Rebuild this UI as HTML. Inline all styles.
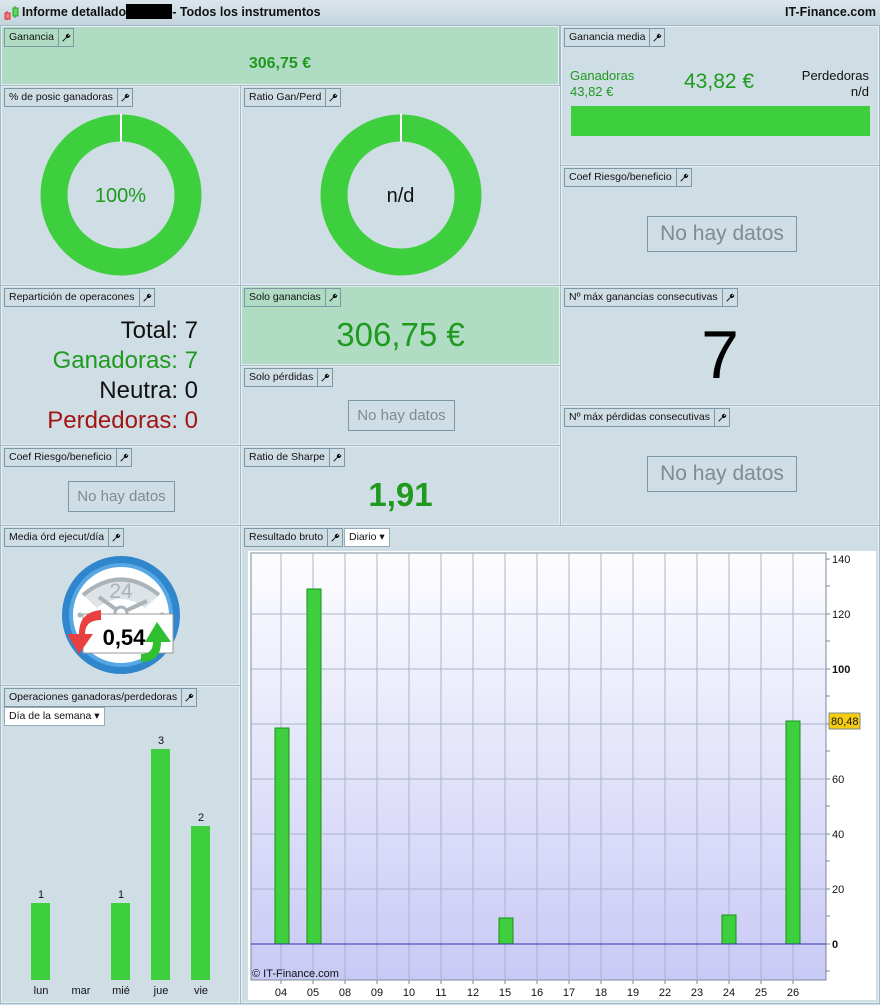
<!DOCTYPE html>
<html><head><meta charset="utf-8"><style>
*{margin:0;padding:0;box-sizing:border-box}
body{width:880px;height:1004px;background:#cfdde4;font-family:"Liberation Sans",sans-serif;position:relative;overflow:hidden}
.hdr{position:absolute;left:0;top:0;width:880px;height:25px;background:linear-gradient(#dbe6ec,#c3d4dd);font-weight:bold;font-size:12.5px;line-height:25px;color:#111}
.p{position:absolute;border:1px solid #a2bac8;outline:1px solid #e6eef2;outline-offset:-2px;background:#cfdde4}
.g{background:#b0dcc4}
.t{position:absolute;left:3px;top:2px;height:19px;border:1px solid #7d98a4;font-size:10.5px;line-height:17px;display:flex;color:#111;background:transparent}
.t span{padding:0 4px}
.t i{border-left:1px solid #7d98a4;width:15px;display:flex;align-items:center;justify-content:center}
.nd{position:absolute;border:1px solid #7d98a4;color:#7d8c94;text-align:center}
.c{position:absolute;text-align:center;width:100%}
</style></head><body>
<div class="hdr">
<svg style="position:absolute;left:3px;top:5px" width="16" height="16"><line x1="4" y1="6" x2="4" y2="15" stroke="#c33"/><rect x="2" y="8" width="5" height="6" fill="#f77" stroke="#c33"/><line x1="12" y1="1" x2="12" y2="13" stroke="#393"/><rect x="10" y="3" width="5" height="8" fill="#5d5" stroke="#393"/></svg>
<span style="position:absolute;left:22px">Informe detallado<span style="display:inline-block;width:46px;height:15px;background:#000;vertical-align:-3px"></span>- Todos los instrumentos</span>
<span style="position:absolute;right:4px">IT-Finance.com</span>
</div>

<svg width="0" height="0" style="position:absolute"><defs><symbol id="w" viewBox="0 0 10 10"><path d="M9 1.5a2.5 2.5 0 0 1-3.3 3.3L2 8.6 1.3 7.9 5 4.2A2.5 2.5 0 0 1 8.3 1L6.8 2.5 7.5 3.2z" fill="#111"/></symbol></defs></svg>

<div class="p g" style="left:0;top:25px;width:560px;height:61px"><div class="t"><span>Ganancia</span><i><svg width="10" height="10"><use href="#w"/></svg></i></div><div class="c" style="top:29px;font-size:16px;font-weight:bold;color:#1f9a1f">306,75 €</div></div>

<div class="p" style="left:560px;top:25px;width:320px;height:141px"><div class="t"><span>Ganancia media</span><i><svg width="10" height="10"><use href="#w"/></svg></i></div>
<div style="position:absolute;left:9px;top:42px;font-size:13px;color:#1f9a1f;line-height:16px">Ganadoras<br>43,82 €</div>
<div style="position:absolute;left:123px;top:44px;font-size:21px;color:#1f9a1f">43,82 €</div>
<div style="position:absolute;right:10px;top:42px;font-size:13px;color:#111;line-height:16px;text-align:right">Perdedoras<br>n/d</div>
<div style="position:absolute;left:10px;top:80px;width:299px;height:30px;background:#3ecf3e"></div></div>

<div class="p" style="left:0;top:85px;width:241px;height:201px"><div class="t"><span>% de posic ganadoras</span><i><svg width="10" height="10"><use href="#w"/></svg></i></div>
<svg style="position:absolute;left:39px;top:28px" width="162" height="162"><circle cx="81" cy="81" r="67" fill="none" stroke="#3ecf3e" stroke-width="27"/><line x1="81" y1="0" x2="81" y2="28" stroke="#fff" stroke-width="2"/></svg>
<div class="c" style="top:99px;font-size:20px;color:#1f9a1f">100%</div></div>

<div class="p" style="left:240px;top:85px;width:321px;height:201px"><div class="t"><span>Ratio Gan/Perd</span><i><svg width="10" height="10"><use href="#w"/></svg></i></div>
<svg style="position:absolute;left:79px;top:28px" width="162" height="162"><circle cx="81" cy="81" r="67" fill="none" stroke="#3ecf3e" stroke-width="27"/><line x1="81" y1="0" x2="81" y2="28" stroke="#fff" stroke-width="2"/></svg>
<div class="c" style="top:99px;font-size:20px;color:#111">n/d</div></div>

<div class="p" style="left:560px;top:165px;width:320px;height:121px"><div class="t"><span>Coef Riesgo/beneficio</span><i><svg width="10" height="10"><use href="#w"/></svg></i></div>
<div class="nd" style="left:86px;top:50px;width:150px;height:36px;font-size:21px;line-height:34px">No hay datos</div></div>

<div class="p" style="left:0;top:285px;width:241px;height:161px"><div class="t"><span>Repartición de operacones</span><i><svg width="10" height="10"><use href="#w"/></svg></i></div>
<div style="position:absolute;right:42px;top:30px;text-align:right;font-size:24px;line-height:30px"><div style="color:#111">Total: 7</div><div style="color:#1f9a1f">Ganadoras: 7</div><div style="color:#111">Neutra: 0</div><div style="color:#a31515">Perdedoras: 0</div></div></div>

<div class="p g" style="left:240px;top:285px;width:321px;height:81px"><div class="t"><span>Solo ganancias</span><i><svg width="10" height="10"><use href="#w"/></svg></i></div><div class="c" style="top:30px;font-size:33px;color:#1f9a1f">306,75 €</div></div>

<div class="p" style="left:240px;top:365px;width:321px;height:81px"><div class="t"><span>Solo pérdidas</span><i><svg width="10" height="10"><use href="#w"/></svg></i></div>
<div class="nd" style="left:107px;top:34px;width:107px;height:31px;font-size:15px;line-height:29px">No hay datos</div></div>

<div class="p" style="left:560px;top:285px;width:320px;height:121px"><div class="t"><span>Nº máx ganancias consecutivas</span><i><svg width="10" height="10"><use href="#w"/></svg></i></div><div class="c" style="top:30px;font-size:68px;color:#000">7</div></div>

<div class="p" style="left:560px;top:405px;width:320px;height:121px"><div class="t"><span>Nº máx pérdidas consecutivas</span><i><svg width="10" height="10"><use href="#w"/></svg></i></div>
<div class="nd" style="left:86px;top:50px;width:150px;height:36px;font-size:21px;line-height:34px">No hay datos</div></div>

<div class="p" style="left:0;top:445px;width:241px;height:81px"><div class="t"><span>Coef Riesgo/beneficio</span><i><svg width="10" height="10"><use href="#w"/></svg></i></div>
<div class="nd" style="left:67px;top:35px;width:107px;height:31px;font-size:15px;line-height:29px">No hay datos</div></div>

<div class="p" style="left:240px;top:445px;width:321px;height:81px"><div class="t"><span>Ratio de Sharpe</span><i><svg width="10" height="10"><use href="#w"/></svg></i></div><div class="c" style="top:30px;font-size:33px;font-weight:bold;color:#1f9a1f">1,91</div></div>

<div class="p" style="left:0;top:525px;width:241px;height:161px"><div class="t"><span>Media órd ejecut/día</span><i><svg width="10" height="10"><use href="#w"/></svg></i></div>
<svg style="position:absolute;left:60px;top:24px" width="130" height="130">
<circle cx="60" cy="65" r="59" fill="#2f86cc"/><circle cx="60" cy="65" r="52" fill="#55a8e4"/><circle cx="60" cy="65" r="48" fill="#fff"/>
<path d="M22 45 Q60 15 98 45 L84 58 Q60 40 36 58Z" fill="#dde3e6"/>
<path d="M22 45 Q60 14 98 45" fill="none" stroke="#a9b3b8" stroke-width="4"/>
<text x="60" y="48" font-size="21" text-anchor="middle" fill="#a9b3b8" font-family="Liberation Sans">24</text>
<line x1="60" y1="63" x2="38" y2="47" stroke="#a9b3b8" stroke-width="4"/><line x1="60" y1="63" x2="86" y2="51" stroke="#a9b3b8" stroke-width="4"/><circle cx="60" cy="63" r="6" fill="#fff" stroke="#a9b3b8" stroke-width="3"/>
<circle cx="19" cy="65" r="2.5" fill="#a9b3b8"/><circle cx="101" cy="65" r="2.5" fill="#a9b3b8"/>
<rect x="22" y="64" width="90" height="39" fill="#fff" stroke="#999"/>
<path d="M40 60 Q18 62 18 84 L6 84 L18 104 L32 84 L24 84 Q24 70 40 70Z" fill="#e84040"/>
<path d="M80 112 Q100 112 100 92 L110 92 L96 72 L84 92 L92 92 Q92 104 80 104Z" fill="#2fbf2f"/>
<text x="63" y="95" font-size="22" font-weight="bold" text-anchor="middle" fill="#000" font-family="Liberation Sans">0,54</text>
</svg></div>

<div class="p" style="left:0;top:685px;width:241px;height:319px"><div class="t"><span>Operaciones ganadoras/perdedoras</span><i><svg width="10" height="10"><use href="#w"/></svg></i></div>
<div class="t" style="top:21px;background:#fff;border-color:#9ab"><span>Día de la semana ▾</span></div>
<svg style="position:absolute;left:0;top:40px" width="240" height="279" font-family="Liberation Sans" font-size="11" text-anchor="middle" fill="#111">
<rect x="30" y="177" width="19" height="77" fill="#3ecf3e"/><text x="40" y="172">1</text>
<rect x="110" y="177" width="19" height="77" fill="#3ecf3e"/><text x="120" y="172">1</text>
<rect x="150" y="23" width="19" height="231" fill="#3ecf3e"/><text x="160" y="18">3</text>
<rect x="190" y="100" width="19" height="154" fill="#3ecf3e"/><text x="200" y="95">2</text>
<text x="40" y="268">lun</text><text x="80" y="268">mar</text><text x="120" y="268">mié</text><text x="160" y="268">jue</text><text x="200" y="268">vie</text>
</svg></div>

<div class="p" style="left:240px;top:525px;width:640px;height:479px"><div class="t"><span>Resultado bruto</span><i><svg width="10" height="10"><use href="#w"/></svg></i></div>
<div class="t" style="left:103px;background:#fff;border-color:#9ab"><span>Diario ▾</span></div></div>

<svg style="position:absolute;left:0;top:0" width="880" height="1004" font-family="Liberation Sans" font-size="11" fill="#111">
<defs><linearGradient id="bg" x1="0" y1="0" x2="0" y2="1"><stop offset="0" stop-color="#fdfdff"/><stop offset="1" stop-color="#c9c9f6"/></linearGradient></defs>
<rect x="248" y="551" width="628" height="449" fill="#fff"/>
<rect x="251" y="553" width="575" height="427" fill="url(#bg)" stroke="#7a8a99"/>
<g stroke="#a9b4c8" stroke-width="1">
<line x1="251" y1="889" x2="826" y2="889"/><line x1="251" y1="834" x2="826" y2="834"/><line x1="251" y1="779" x2="826" y2="779"/><line x1="251" y1="724" x2="826" y2="724"/><line x1="251" y1="669" x2="826" y2="669"/><line x1="251" y1="614" x2="826" y2="614"/>
<line x1="281" y1="553" x2="281" y2="980"/><line x1="313" y1="553" x2="313" y2="980"/><line x1="345" y1="553" x2="345" y2="980"/><line x1="377" y1="553" x2="377" y2="980"/><line x1="409" y1="553" x2="409" y2="980"/><line x1="441" y1="553" x2="441" y2="980"/><line x1="473" y1="553" x2="473" y2="980"/><line x1="505" y1="553" x2="505" y2="980"/><line x1="537" y1="553" x2="537" y2="980"/><line x1="569" y1="553" x2="569" y2="980"/><line x1="601" y1="553" x2="601" y2="980"/><line x1="633" y1="553" x2="633" y2="980"/><line x1="665" y1="553" x2="665" y2="980"/><line x1="697" y1="553" x2="697" y2="980"/><line x1="729" y1="553" x2="729" y2="980"/><line x1="761" y1="553" x2="761" y2="980"/><line x1="793" y1="553" x2="793" y2="980"/>
</g>
<g fill="#3ecf3e" stroke="#169316">
<rect x="275" y="728" width="14" height="216"/><rect x="307" y="589" width="14" height="355"/><rect x="499" y="918" width="14" height="26"/><rect x="722" y="915" width="14" height="29"/><rect x="786" y="721" width="14" height="223"/>
</g>
<line x1="251" y1="944" x2="826" y2="944" stroke="#3333aa"/>
<g stroke="#7a8a99"><line x1="826" y1="559" x2="830" y2="559"/><line x1="826" y1="586" x2="830" y2="586"/><line x1="826" y1="614" x2="830" y2="614"/><line x1="826" y1="641" x2="830" y2="641"/><line x1="826" y1="669" x2="830" y2="669"/><line x1="826" y1="696" x2="830" y2="696"/><line x1="826" y1="724" x2="830" y2="724"/><line x1="826" y1="751" x2="830" y2="751"/><line x1="826" y1="779" x2="830" y2="779"/><line x1="826" y1="806" x2="830" y2="806"/><line x1="826" y1="834" x2="830" y2="834"/><line x1="826" y1="861" x2="830" y2="861"/><line x1="826" y1="889" x2="830" y2="889"/><line x1="826" y1="916" x2="830" y2="916"/><line x1="826" y1="944" x2="830" y2="944"/><line x1="826" y1="971" x2="830" y2="971"/>
<line x1="281" y1="980" x2="281" y2="984"/><line x1="313" y1="980" x2="313" y2="984"/><line x1="345" y1="980" x2="345" y2="984"/><line x1="377" y1="980" x2="377" y2="984"/><line x1="409" y1="980" x2="409" y2="984"/><line x1="441" y1="980" x2="441" y2="984"/><line x1="473" y1="980" x2="473" y2="984"/><line x1="505" y1="980" x2="505" y2="984"/><line x1="537" y1="980" x2="537" y2="984"/><line x1="569" y1="980" x2="569" y2="984"/><line x1="601" y1="980" x2="601" y2="984"/><line x1="633" y1="980" x2="633" y2="984"/><line x1="665" y1="980" x2="665" y2="984"/><line x1="697" y1="980" x2="697" y2="984"/><line x1="729" y1="980" x2="729" y2="984"/><line x1="761" y1="980" x2="761" y2="984"/><line x1="793" y1="980" x2="793" y2="984"/></g>
<g font-size="11"><text x="832" y="563">140</text><text x="832" y="618">120</text><text x="832" y="673" font-weight="bold">100</text><text x="832" y="783">60</text><text x="832" y="838">40</text><text x="832" y="893">20</text><text x="832" y="948" font-weight="bold">0</text></g>
<rect x="829" y="713" width="31" height="16" fill="#f5cc10" stroke="#7a8a99"/><text x="831" y="725">80,48</text>
<text x="252" y="977" font-size="11">© IT-Finance.com</text>
<g text-anchor="middle"><text x="281" y="996">04</text><text x="313" y="996">05</text><text x="345" y="996">08</text><text x="377" y="996">09</text><text x="409" y="996">10</text><text x="441" y="996">11</text><text x="473" y="996">12</text><text x="505" y="996">15</text><text x="537" y="996">16</text><text x="569" y="996">17</text><text x="601" y="996">18</text><text x="633" y="996">19</text><text x="665" y="996">22</text><text x="697" y="996">23</text><text x="729" y="996">24</text><text x="761" y="996">25</text><text x="793" y="996">26</text></g>
</svg>
</body></html>
